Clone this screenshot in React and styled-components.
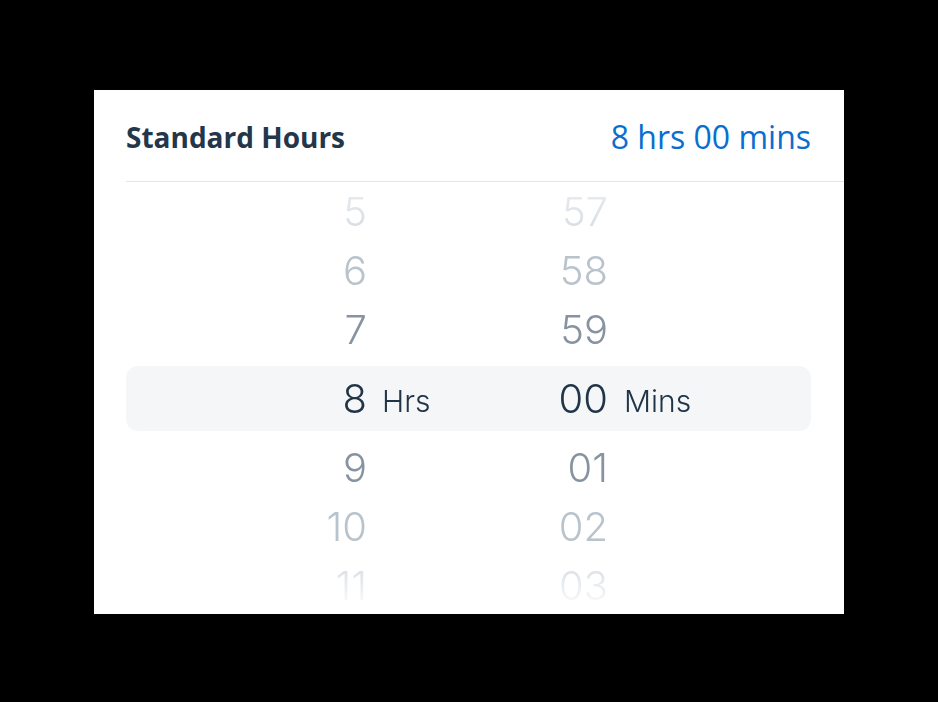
import React from "react";
import styled, { createGlobalStyle } from "styled-components";

const GlobalStyle = createGlobalStyle`
  html, body {
    margin: 0;
    padding: 0;
    background: #000;
  }
  body {
    font-family: Inter, "Liberation Sans", sans-serif;
  }
`;

const Page = styled.div`
  width: 938px;
  height: 702px;
  padding: 90px 0 0 94px;
  box-sizing: border-box;
`;

const Card = styled.div`
  width: 750px;
  height: 524px;
  background: #fff;
  overflow: hidden;
`;

const Header = styled.div`
  display: flex;
  align-items: center;
  justify-content: space-between;
  height: 92px;
  margin-left: 32px;
  padding-right: 33px;
  padding-top: 2px;
  border-bottom: 1px solid #e2e6ea;
  box-sizing: border-box;
`;

const Title = styled.h2`
  margin: 0;
  font-family: "Open Sans", sans-serif;
  font-size: 28px;
  font-weight: 700;
  color: #243649;
`;

const Value = styled.span`
  font-family: "Open Sans", sans-serif;
  font-size: 32px;
  color: #0a6ed1;
`;

const Picker = styled.div`
  display: flex;
  flex-direction: column;
  padding: 0 33px 0 32px;
  -webkit-mask-image: linear-gradient(
    to bottom,
    rgba(0, 0, 0, 0.45) 0px,
    #000 50px,
    #000 380px,
    rgba(0, 0, 0, 0.1) 425px
  );
  mask-image: linear-gradient(
    to bottom,
    rgba(0, 0, 0, 0.45) 0px,
    #000 50px,
    #000 380px,
    rgba(0, 0, 0, 0.1) 425px
  );
`;

const shades = {
  3: "#d6dce2",
  2: "#b9c3cc",
  1: "#8793a0",
  0: "#223548",
};

const Row = styled.div`
  display: grid;
  grid-template-columns: 241px 100px 141px 1fr;
  align-items: center;
  height: ${(p) => (p.$selected ? "65px" : "59px")};
  margin: ${(p) => (p.$selected ? "7px 0" : "0")};
  border-radius: 12px;
  background: ${(p) => (p.$selected ? "#f4f6f8" : "transparent")};
  color: ${(p) => shades[p.$distance]};
  font-family: Inter, sans-serif;
  font-weight: 300;
`;

const Num = styled.span`
  text-align: right;
  font-size: 40px;
  line-height: 1;
`;

const Unit = styled.span`
  padding-left: ${(p) => p.$gap}px;
  font-size: 30px;
  line-height: 1;
  padding-top: 4px;
`;

const rows = [
  { h: "5", m: "57", d: 3 },
  { h: "6", m: "58", d: 2 },
  { h: "7", m: "59", d: 1 },
  { h: "8", m: "00", d: 0 },
  { h: "9", m: "01", d: 1 },
  { h: "10", m: "02", d: 2 },
  { h: "11", m: "03", d: 3 },
];

export default function App() {
  return (
    <>
      <GlobalStyle />
      <Page>
        <Card>
          <Header>
            <Title>Standard Hours</Title>
            <Value>8 hrs 00 mins</Value>
          </Header>
          <Picker>
            {rows.map((r) => (
              <Row key={r.h} $selected={r.d === 0} $distance={r.d}>
                <Num>{r.h}</Num>
                <Unit $gap={15}>{r.d === 0 ? "Hrs" : ""}</Unit>
                <Num>{r.m}</Num>
                <Unit $gap={16}>{r.d === 0 ? "Mins" : ""}</Unit>
              </Row>
            ))}
          </Picker>
        </Card>
      </Page>
    </>
  );
}
